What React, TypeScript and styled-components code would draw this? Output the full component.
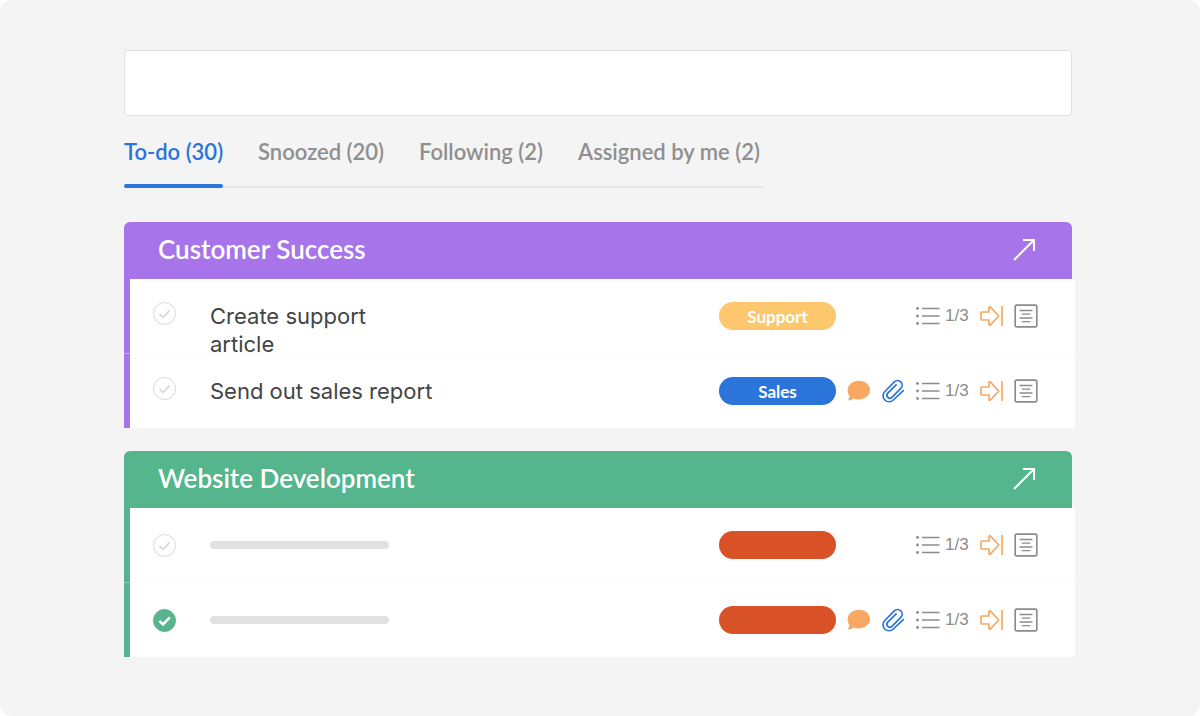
import React from "react";
import styled, { createGlobalStyle, css } from "styled-components";

const blue = "#2a74da";
const orange = "#f9a864";
const grey = "#8c8c8c";

const GlobalStyle = createGlobalStyle`
  *, *::before, *::after { box-sizing: border-box; }
  body { margin: 0; background: #fff; }
  button { font: inherit; color: inherit; background: none; border: 0; padding: 0; cursor: pointer; }
  svg { display: block; flex: none; }
`;

const Page = styled.main`
  min-height: 100vh;
  padding: 50px 128px 56px 124px;
  background: #f4f4f4;
  border-radius: 12px;
  font-family: Lato, "Liberation Sans", sans-serif;
`;

const SearchInput = styled.input`
  display: block;
  width: 100%;
  height: 66px;
  padding: 0 24px;
  background: #fff;
  border: 1px solid #dfdfdf;
  border-radius: 4px;
  font: 400 20px Inter, sans-serif;
  color: #444;
  outline: none;
`;

const Tabs = styled.nav`
  display: flex;
  gap: 35px;
  width: fit-content;
  margin-top: 20px;
  padding-right: 4px;
  box-shadow: inset 0 -2px #e6e6e6;
`;

const Tab = styled.a<{ $active?: boolean }>`
  position: relative;
  height: 52px;
  color: ${(p) => (p.$active ? blue : "#8f8f8f")};
  font-size: 22px;
  font-weight: 600;
  line-height: 32px;
  text-decoration: none;
  white-space: nowrap;
  ${(p) =>
    p.$active &&
    css`
      &::after {
        content: "";
        position: absolute;
        left: 0;
        right: 0;
        bottom: 0;
        height: 4px;
        border-radius: 2px;
        background: ${blue};
      }
    `}
`;

const Panels = styled.div`
  display: flex;
  flex-direction: column;
  gap: 23px;
  margin-top: 34px;
`;

const PanelHeader = styled.header<{ $color: string }>`
  display: flex;
  align-items: center;
  justify-content: space-between;
  height: 57px;
  padding: 0 37px 4px 34px;
  background: ${(p) => p.$color};
  border-radius: 6px 6px 0 0;
  color: #fff;
`;

const PanelTitle = styled.h2`
  margin: 0;
  font-size: 26px;
  font-weight: 600;
  line-height: 32px;
`;

const TaskList = styled.ul<{ $tint: string }>`
  display: flex;
  flex-direction: column;
  gap: 1px;
  margin: 0 -3px 0 0;
  padding: 0;
  list-style: none;
  background: linear-gradient(to right, ${(p) => p.$tint} 6px, #fbfbfb 6px);
`;

const TaskRow = styled.li<{ $color: string; $centered: boolean }>`
  display: flex;
  align-items: ${(p) => (p.$centered ? "center" : "flex-start")};
  height: 74px;
  padding: ${(p) => (p.$centered ? "0 37px 0 23px" : "23px 37px 0 23px")};
  background: #fff;
  border-left: 6px solid ${(p) => p.$color};
`;

const CheckWrap = styled.span`
  position: relative;
  flex: none;
  width: 23px;
  height: 23px;
  margin-right: 34px;

  svg {
    position: absolute;
    inset: 0;
    pointer-events: none;
  }
`;

const CheckInput = styled.input`
  appearance: none;
  display: block;
  width: 23px;
  height: 23px;
  margin: 0;
  border: 1px solid #d9d9d9;
  border-radius: 50%;
  background: #fff;

  &:checked {
    border-color: #55b58c;
    background: #55b58c;
  }
`;

const TaskLabel = styled.label`
  width: 240px;
  margin-right: auto;
  color: #444;
  font-family: Inter, sans-serif;
  font-size: 22px;
  line-height: 28px;
`;

const TaskText = styled.span<{ $narrow?: boolean }>`
  display: block;
  max-width: ${(p) => (p.$narrow ? "180px" : "none")};
`;

const Placeholder = styled.span`
  display: block;
  width: 179px;
  height: 8px;
  border-radius: 4px;
  background: #e1e1e1;
`;

const Tag = styled.span<{ $color: string }>`
  flex: none;
  width: 117px;
  height: 28px;
  border-radius: 14px;
  background: ${(p) => p.$color};
  color: #fff;
  font-size: 17px;
  font-weight: 700;
  line-height: 29px;
  text-align: center;
`;

const Tools = styled.div`
  display: flex;
  flex: none;
  align-items: center;
  justify-content: flex-end;
  gap: 11px;
  width: 202px;
  height: 28px;
`;

const ToolButton = styled.button`
  flex: none;
  height: 24px;
`;

const Subtasks = styled.button`
  display: flex;
  align-items: center;
  gap: 5px;
  width: 52px;
  height: 28px;
  color: ${grey};
  font-family: "Liberation Sans", sans-serif;
  font-size: 17px;
  line-height: 28px;
`;

const ArrowIcon = () => (
  <svg width="22" height="24" viewBox="0 0 22 24" fill="none" stroke="#fff" strokeWidth="2">
    <path d="M1 23 21 3M10 3h11v11" />
  </svg>
);

const TickIcon = ({ checked }: { checked?: boolean }) => (
  <svg width="23" height="23" viewBox="0 0 23 23" fill="none" stroke={checked ? "#fff" : "#d9d9d9"} strokeWidth={checked ? 2.6 : 1.8}>
    <path d="M6.5 12 10 15.400 16.800 8.400" />
  </svg>
);

const CommentIcon = () => (
  <svg width="24" height="24" viewBox="-0.7 0.500 24 24" fill={orange}>
    <path d="M12.2 2.2c6.2 0 11.2 4.2 11.2 9.4S18.400 21 12.200 21c-2 0-3.800-.4-5.400-1.100C5.300 21.200 3.200 21.900.8 21.800c1-1 1.700-2.500 1.900-4.300C1.500 15.900.9 13.900.9 11.600.9 6.400 6 2.200 12.200 2.200z" />
  </svg>
);

const ClipIcon = () => (
  <svg width="24" height="24" viewBox="0 0 24 24" fill="none" stroke={blue} strokeWidth="1.700" strokeLinecap="round" strokeLinejoin="round">
    <path d="M22.300 11.600 12.300 21a6 6 0 0 1-8.500 0 6 6 0 0 1 0-8.500L13.300 2.900a4.600 4.600 0 0 1 6.500 0 4.600 4.600 0 0 1 0 6.500l-8.900 8.900a2.900 2.900 0 0 1-4.100 0 2.900 2.900 0 0 1 0-4.100l8.300-8.300" />
  </svg>
);

const ListIcon = () => (
  <svg width="24" height="18" viewBox="0 0 24 18" fill="none" stroke={grey} strokeWidth="1.600">
    <path d="M6 1.500h17.500M6 9h17.500M6 16.500h17.500" />
    <g fill={grey} stroke="none">
      <circle cx="1.500" cy="1.500" r="1.400" />
      <circle cx="1.500" cy="9" r="1.400" />
      <circle cx="1.500" cy="16.500" r="1.400" />
    </g>
  </svg>
);

const SkipIcon = () => (
  <svg width="24" height="24" viewBox="0 0 24 24" fill="none" stroke={orange} strokeWidth="1.700" strokeLinejoin="round">
    <path d="M2.800 8h7.200V3.800q0-1.800 1.500-.6l8.300 8.800-8.300 8.800q-1.500 1.200-1.500-.6V16H2.800q-.8 0-.8-.8V8.800q0-.8.8-.8zM23 2v20" />
  </svg>
);

const NoteIcon = () => (
  <svg width="24" height="24" viewBox="0 0 24 24" fill="none" stroke={grey}>
    <rect x="1.200" y="1.200" width="21.600" height="21.600" rx="1.200" strokeWidth="1.700" />
    <path d="M5.500 6.500h13M7.800 10.200h8.600M5.500 14h13M7.800 17.700h8.600" strokeWidth="1.300" />
  </svg>
);

type Task = {
  id: string;
  text?: string;
  narrow?: boolean;
  done?: boolean;
  tag?: string;
  tagColor: string;
  attachments?: boolean;
};

type Group = { title: string; color: string; tint: string; tasks: Task[] };

const groups: Group[] = [
  {
    title: "Customer Success",
    color: "#a774e9",
    tint: "#c9a9f2",
    tasks: [
      { id: "article", text: "Create support article", narrow: true, tag: "Support", tagColor: "#fdc76e" },
      { id: "report", text: "Send out sales report", tag: "Sales", tagColor: blue, attachments: true },
    ],
  },
  {
    title: "Website Development",
    color: "#55b58c",
    tint: "#8ccdb0",
    tasks: [
      { id: "web-1", tagColor: "#d85127" },
      { id: "web-2", done: true, tagColor: "#d85127", attachments: true },
    ],
  },
];

const tabs = ["To-do (30)", "Snoozed (20)", "Following (2)", "Assigned by me (2)"];

const TaskItem = ({ task, color }: { task: Task; color: string }) => (
  <TaskRow $color={color} $centered={!task.text}>
    <CheckWrap>
      <CheckInput type="checkbox" id={task.id} defaultChecked={task.done} />
      <TickIcon checked={task.done} />
    </CheckWrap>
    <TaskLabel htmlFor={task.id}>
      {task.text ? <TaskText $narrow={task.narrow}>{task.text}</TaskText> : <Placeholder />}
    </TaskLabel>
    <Tag $color={task.tagColor}>{task.tag}</Tag>
    <Tools>
      {task.attachments && (
        <>
          <ToolButton aria-label="Comments"><CommentIcon /></ToolButton>
          <ToolButton aria-label="Attachments"><ClipIcon /></ToolButton>
        </>
      )}
      <Subtasks>
        <ListIcon />
        1/3
      </Subtasks>
      <ToolButton aria-label="Snooze"><SkipIcon /></ToolButton>
      <ToolButton aria-label="Notes"><NoteIcon /></ToolButton>
    </Tools>
  </TaskRow>
);

export default function App() {
  return (
    <Page>
      <GlobalStyle />
      <SearchInput type="text" aria-label="Add a task" />
      <Tabs>
        {tabs.map((tab, i) => (
          <Tab key={tab} href="#" $active={i === 0}>{tab}</Tab>
        ))}
      </Tabs>
      <Panels>
        {groups.map((group) => (
          <section key={group.title}>
            <PanelHeader $color={group.color}>
              <PanelTitle>{group.title}</PanelTitle>
              <button aria-label={`Open ${group.title}`}><ArrowIcon /></button>
            </PanelHeader>
            <TaskList $tint={group.tint}>
              {group.tasks.map((task) => (
                <TaskItem key={task.id} task={task} color={group.color} />
              ))}
            </TaskList>
          </section>
        ))}
      </Panels>
    </Page>
  );
}
